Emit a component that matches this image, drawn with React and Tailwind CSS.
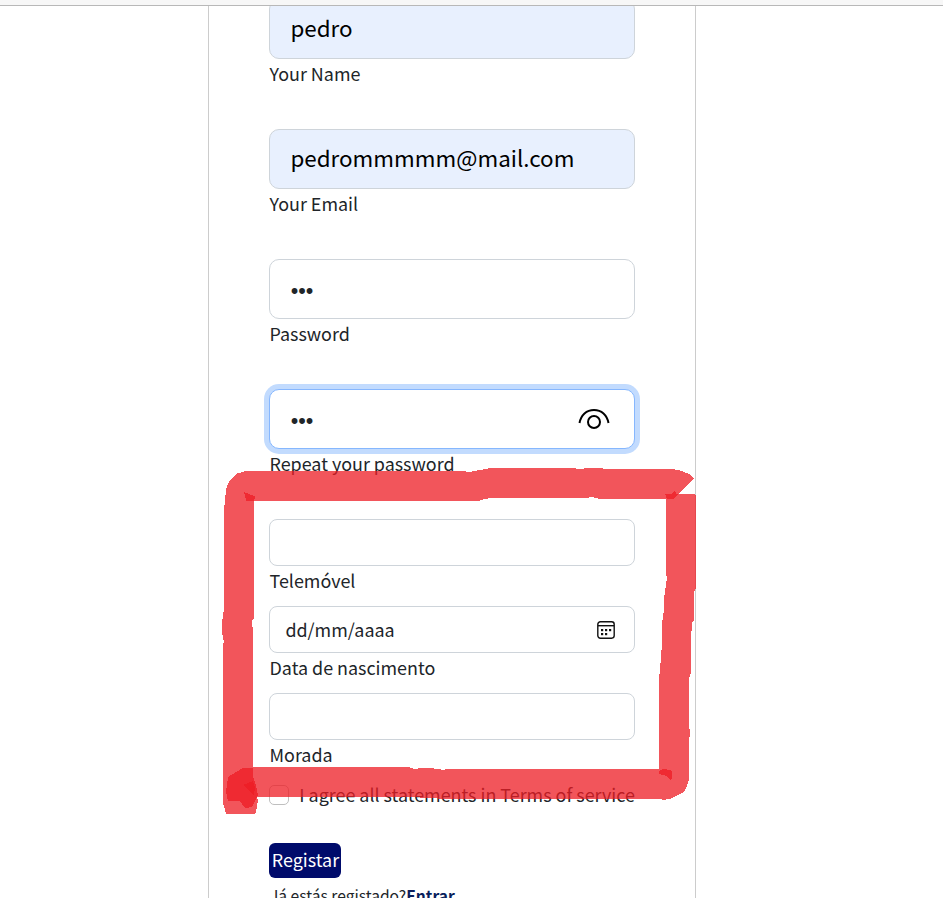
function Field({ label, filled, focused, children }) {
  return (
    <div className="h-[130px]">
      <div
        className={`flex h-[60px] items-center rounded-[10px] border pb-[2px] pl-[20.4px] pr-[21px] text-[22.4px] text-black ${
          filled ? "bg-[#e8f0fe]" : "bg-white"
        } ${focused ? "border-[#86b7fe] ring-[5px] ring-[#c2dbfe]" : "border-[#ced4da]"}`}
      >
        {children}
      </div>
      <Label>{label}</Label>
    </div>
  );
}

function SmallField({ label, children }) {
  return (
    <div className="h-[87px]">
      <div className="flex h-[47px] items-center justify-between rounded-[8px] border border-[#ced4da] bg-white pl-[15.4px] pr-[19px]">
        {children}
      </div>
      <Label>{label}</Label>
    </div>
  );
}

function Label({ children }) {
  return <div className="h-[30px] pl-[0.5px] leading-[28px]">{children}</div>;
}

function Bullets() {
  return <span className="pl-[0.3px] pt-[6px] font-['Liberation_Sans',sans-serif] text-[21.6px] text-[#212529]">•••</span>;
}

function EyeIcon() {
  return (
    <svg className="ml-auto mr-[3px] mt-[2px] h-[22px] w-[32px]" viewBox="0 0 32 22" fill="none" stroke="#000" strokeWidth="2">
      <path d="M1.5 15C3 7 8.5 2 16 2S29 7 30.5 15" />
      <circle cx="16" cy="14" r="6" />
    </svg>
  );
}

function CalendarIcon() {
  return (
    <svg className="h-[18px] w-[18px]" viewBox="0 0 18 18" fill="none" stroke="#111" strokeWidth="1.4">
      <rect x="0.8" y="0.8" width="16.4" height="16.4" rx="2.6" />
      <path d="M1 4.7H17" />
      <g fill="#111" stroke="none">
        <rect x="4" y="8" width="2.2" height="2.2" />
        <rect x="8" y="8" width="2.2" height="2.2" />
        <rect x="12" y="8" width="2.2" height="2.2" />
        <rect x="4" y="12" width="2.2" height="2.2" />
        <rect x="8" y="12" width="2.2" height="2.2" />
      </g>
    </svg>
  );
}

function Marker() {
  return (
    <svg
      className="pointer-events-none absolute left-0 top-0"
      width="943"
      height="898"
      viewBox="0 0 943 898"
      fill="#ed1c24"
      fillOpacity="0.75"
      shapeRendering="crispEdges"
    >
      <path
        fillRule="evenodd"
        d="M224 510L225 500L226 490L227 486L230 480L237 473.5L246 471H466V472L472 471.5L480 470L491 468H576V469H584V468H603V469H672L682 471L689 474L694 478L678 494H695L696 496V588L694 592V620L692 623L691 640V673L689 678V727L690 730V736L689 737V780L687 786L684 792L670 799L662 800V799H445L431 798L408 797H257L258 800L256 812L254 814H226L224 806L223 803V643L224 642L222 632V624L223 614L224 610ZM254 501V618L252 621L253 632V767H409L410 768L416 769L420 768H430L444 770L445 769H659V677L660 672L661 655L662 645V623L664 610V598L666 585L667 577L666 575V499H600L592 497L585 498H491L485 499L480 500.5L460 501Z"
      />
      <path d="M244 492L255 496.5L254 501H246L245 495Z" />
      <path d="M665 494H672L675 490L676 494H678L674 499H667Z" />
      <path d="M659 771L663 769L671 770L672 772V778L671 781L667 776L659 774Z" />
      <path d="M228 777L243 768H253V777L256 785L258 795L252 807L245 808L240 801H228L226 792Z" />
      <path d="M243 785L253 781L255 787L254 796L251 792Z" />
    </svg>
  );
}

export default function App() {
  return (
    <div className="relative h-[898px] w-[943px] overflow-hidden bg-white font-['Noto_Sans_CJK_SC',sans-serif] text-[17.92px] text-[#212529]">
      <div className="relative z-10 h-[6px] border-b border-[#b8b8b8] bg-[#f7f7f7]" />
      <main className="ml-[208px] flow-root h-[892px] w-[488px] border-x border-[#ccc] px-[60px]">
        <div className="-mt-[7px]">
          <Field label="Your Name" filled>pedro</Field>
          <Field label="Your Email" filled>pedrommmmm@mail.com</Field>
          <Field label="Password"><Bullets /></Field>
          <Field label="Repeat your password" focused>
            <Bullets />
            <EyeIcon />
          </Field>
          <SmallField label="Telemóvel" />
          <SmallField label="Data de nascimento">
            <span>dd/mm/aaaa</span>
            <CalendarIcon />
          </SmallField>
          <SmallField label="Morada" />
          <div className="flex h-[30px] items-center whitespace-nowrap">
            <span className="mr-[10.3px] h-5 w-5 shrink-0 rounded-[5px] border border-[#bfbfbf] bg-white" />
            <span className="pb-[2px]">I agree all statements in Terms of service</span>
          </div>
          <button className="mt-[33px] flex h-[35px] w-[72px] items-center justify-center rounded-[6px] bg-[#000b6b] pb-[2px] pl-[1px] text-white">
            Registar
          </button>
          <p className="ml-px mt-[5px] whitespace-nowrap text-[15.6px] leading-[24px]">
            Já estás registado?<b className="text-[#0a1f5c]">Entrar</b>
          </p>
        </div>
      </main>
      <Marker />
    </div>
  );
}
